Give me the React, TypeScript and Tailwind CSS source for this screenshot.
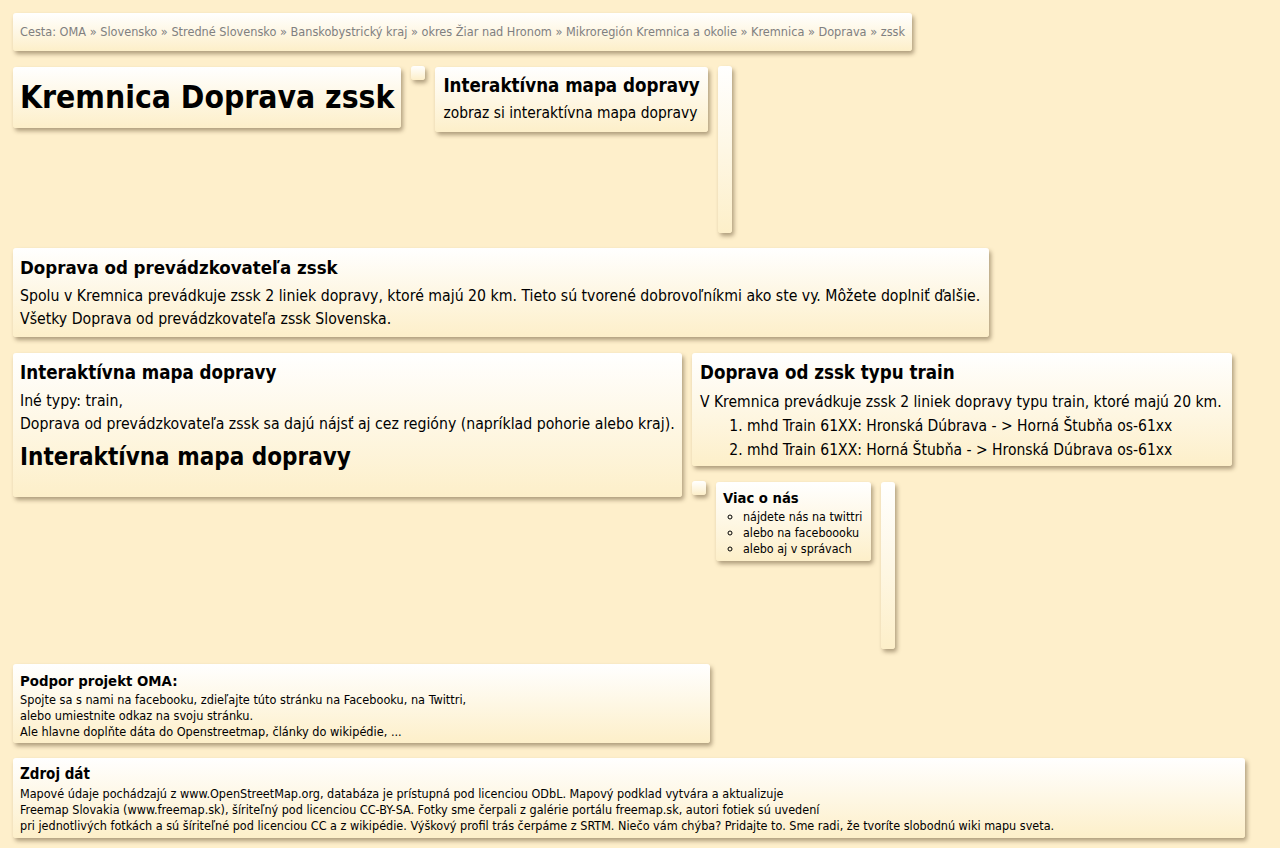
import React from "react";

const Box = ({ className = "", children }: { className?: string; children?: React.ReactNode }) => (
  <div
    className={`rounded-[3px] bg-gradient-to-b from-white to-[#fdefc9] shadow-[2px_3px_4px_rgba(80,60,30,0.45)] ${className}`}
  >
    {children}
  </div>
);

const Square = () => <Box className="h-[14px] w-[14px] shrink-0" />;
const Bar = ({ className = "" }: { className?: string }) => <Box className={`w-[14px] shrink-0 ${className}`} />;

const crumbs = [
  "OMA",
  "Slovensko",
  "Stredné Slovensko",
  "Banskobystrický kraj",
  "okres Žiar nad Hronom",
  "Mikroregión Kremnica a okolie",
  "Kremnica",
  "Doprava",
  "zssk",
];

export default function App() {
  return (
    <div className="min-h-[848px] bg-[#feefcb] px-[13px] pt-[13px] pb-[10px] font-['DejaVu_Sans',sans-serif] font-stretch-condensed text-black">
      <div className="flex flex-col gap-[15px]">
        {/* breadcrumb */}
        <div className="flex">
          <Box className="h-[38px] px-[7px] pt-[11px] text-[12.6px] leading-[16px] text-[#808080]">
            Cesta:{" "}
            {crumbs.map((c, i) => (
              <span key={c}>
                {c}
                {i < crumbs.length - 1 ? " » " : ""}
              </span>
            ))}
          </Box>
        </div>

        {/* title row */}
        <div className="flex items-start gap-[10px]">
          <Box className="mt-px h-[61px] px-[7px] pt-[10px]">
            <h1 className="text-[31.6px] leading-[40px] font-bold whitespace-nowrap">Kremnica Doprava zssk</h1>
          </Box>
          <Square />
          <Box className="mt-px h-[65px] px-[8px] pt-[7px]">
            <h2 className="text-[18.6px] leading-[24px] font-bold whitespace-nowrap">Interaktívna mapa dopravy</h2>
            <p className="mt-[5px] text-[15.4px] leading-[20px] whitespace-nowrap">zobraz si interaktívna mapa dopravy</p>
          </Box>
          <Bar className="h-[167px]" />
        </div>

        {/* operator */}
        <div className="flex">
          <Box className="h-[89px] w-[976px] px-[7px] pt-[8px]">
            <h2 className="text-[18.5px] leading-[23px] font-bold">Doprava od prevádzkovateľa zssk</h2>
            <p className="mt-[5px] text-[15.7px] leading-[23px]">
              Spolu v Kremnica prevádkuje zssk 2 liniek dopravy, ktoré majú 20 km. Tieto sú tvorené dobrovoľníkmi ako ste vy. Môžete doplniť ďalšie.
              <br />
              Všetky Doprava od prevádzkovateľa zssk Slovenska.
            </p>
          </Box>
        </div>

        {/* two columns */}
        <div className="mt-px flex items-start gap-[10px]">
          <Box className="h-[144px] w-[669px] px-[7px] pt-[8px]">
            <h2 className="text-[18.6px] leading-[23px] font-bold">Interaktívna mapa dopravy</h2>
            <p className="mt-[5px] text-[15.7px] leading-[23px]">
              Iné typy: train,
              <br />
              Doprava od prevádzkovateľa zssk sa dajú nájsť aj cez regióny (napríklad pohorie alebo kraj).
            </p>
            <h2 className="mt-[7px] text-[24px] leading-[30px] font-bold">Interaktívna mapa dopravy</h2>
          </Box>
          <div className="flex flex-col gap-[15px]">
            <Box className="h-[113px] w-[540px] pl-[8px] pt-[8px] whitespace-nowrap">
              <h2 className="text-[18.6px] leading-[23px] font-bold">Doprava od zssk typu train</h2>
              <p className="mt-[7px] text-[15.5px] leading-[23px]">
                V Kremnica prevádkuje zssk 2 liniek dopravy typu train, ktoré majú 20 km.
              </p>
              <ol className="list-decimal pl-[47px] text-[15.5px] leading-[24px]">
                <li>mhd Train 61XX: Hronská Dúbrava - &gt; Horná Štubňa os-61xx</li>
                <li>mhd Train 61XX: Horná Štubňa - &gt; Hronská Dúbrava os-61xx</li>
              </ol>
            </Box>
            <div className="flex items-start gap-[10px]">
              <Square />
              <Box className="mt-px h-[79px] w-[155px] pl-[7px] pt-[7px]">
                <h3 className="text-[14.7px] leading-[18px] font-bold">Viac o nás</h3>
                <ul className="mt-[2px] list-[circle] pl-[20px] text-[12.4px] leading-[16px] whitespace-nowrap">
                  <li>nájdete nás na twittri</li>
                  <li>alebo na faceboooku</li>
                  <li>alebo aj v správach</li>
                </ul>
              </Box>
              <Bar className="mt-px h-[167px]" />
            </div>
          </div>
        </div>

        {/* support */}
        <div className="flex">
          <Box className="h-[79px] w-[697px] px-[7px] pt-[6px]">
            <h3 className="text-[14.8px] leading-[21px] font-bold">Podpor projekt OMA:</h3>
            <p className="mt-px text-[12.6px] leading-[16px]">
              Spojte sa s nami na facebooku, zdieľajte túto stránku na Facebooku, na Twittri,
              <br />
              alebo umiestnite odkaz na svoju stránku.
              <br />
              Ale hlavne doplňte dáta do Openstreetmap, články do wikipédie, ...
            </p>
          </Box>
        </div>

        {/* source */}
        <div className="flex">
          <Box className="h-[80px] w-[1232px] px-[7px] pt-[6px]">
            <h3 className="text-[15px] leading-[21px] font-bold">Zdroj dát</h3>
            <p className="mt-px text-[12.5px] leading-[16px]">
              Mapové údaje pochádzajú z www.OpenStreetMap.org, databáza je prístupná pod licenciou ODbL. Mapový podklad vytvára a aktualizuje
              <br />
              Freemap Slovakia (www.freemap.sk), šíriteľný pod licenciou CC-BY-SA. Fotky sme čerpali z galérie portálu freemap.sk, autori fotiek sú uvedení
              <br />
              pri jednotlivých fotkách a sú šíriteľné pod licenciou CC a z wikipédie. Výškový profil trás čerpáme z SRTM. Niečo vám chýba? Pridajte to. Sme radi, že tvoríte slobodnú wiki mapu sveta.
            </p>
          </Box>
        </div>
      </div>
    </div>
  );
}
